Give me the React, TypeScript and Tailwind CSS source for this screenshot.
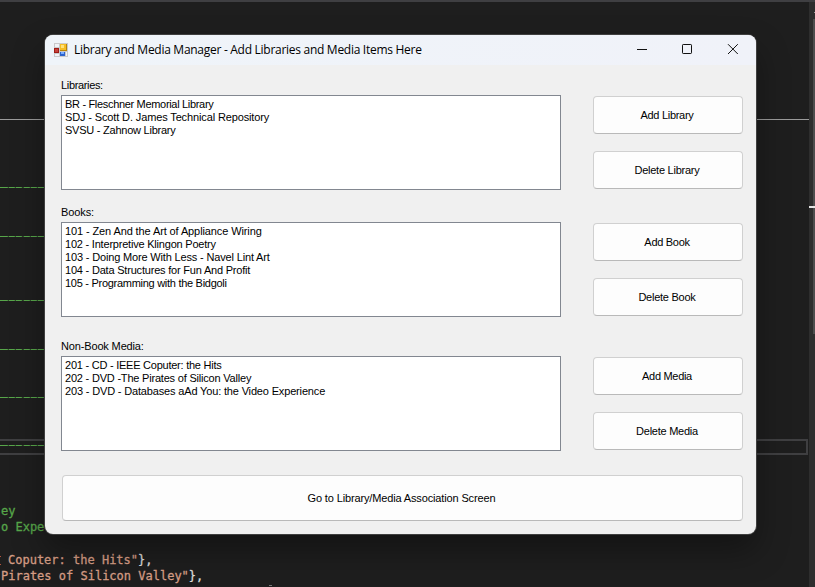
import React from 'react';

type Line = { text: string; track: string };

const libraries: Line[] = [
  { text: 'BR - Fleschner Memorial Library', track: 'tracking-[-0.32px]' },
  { text: 'SDJ - Scott D. James Technical Repository', track: 'tracking-[-0.13px]' },
  { text: 'SVSU - Zahnow Library', track: 'tracking-[-0.24px]' },
];
const books: Line[] = [
  { text: '101 - Zen And the Art of Appliance Wiring', track: 'tracking-[-0.11px]' },
  { text: '102 - Interpretive Klingon Poetry', track: 'tracking-[-0.21px]' },
  { text: '103 - Doing More With Less - Navel Lint Art', track: 'tracking-[-0.16px]' },
  { text: '104 - Data Structures for Fun And Profit', track: 'tracking-[-0.2px]' },
  { text: '105 - Programming with the Bidgoli', track: 'tracking-[-0.28px]' },
];
const media: Line[] = [
  { text: '201 - CD - IEEE Coputer: the Hits', track: 'tracking-[-0.24px]' },
  { text: '202 - DVD -The Pirates of Silicon Valley', track: 'tracking-[-0.2px]' },
  { text: '203 - DVD - Databases aAd You: the Video Experience', track: 'tracking-[-0.16px]' },
];

function Button({ label, size }: { label: string; size: string }) {
  return (
    <button
      className={`${size} flex items-center justify-center rounded-[4px] border border-[#d0d0d0] border-b-[#b9b9b9] bg-[#fdfdfd] pr-[2px] text-[11px] leading-[13px] whitespace-pre`}
    >
      {label}
    </button>
  );
}

function Section({
  label,
  labelTrack,
  lines,
  add,
  remove,
}: {
  label: string;
  labelTrack: string;
  lines: Line[];
  add: string;
  remove: string;
}) {
  return (
    <section className="flex h-[111px] gap-8">
      <div className="w-[500px]">
        <div className={`h-4 text-[11px] leading-[13px] ${labelTrack}`}>{label}</div>
        <ul className="h-[95px] border border-[#828790] bg-white pt-[2px] pl-[3px]">
          {lines.map((l) => (
            <li key={l.text} className={`h-[13px] text-[11px] leading-[13px] whitespace-pre ${l.track}`}>
              {l.text}
            </li>
          ))}
        </ul>
      </div>
      <div className="flex flex-col gap-[17px] pt-[17px]">
        <Button label={add} size="w-[150px] h-[38px] tracking-[-0.3px]" />
        <Button label={remove} size="w-[150px] h-[38px] tracking-[-0.25px]" />
      </div>
    </section>
  );
}

function Dashes({ gap }: { gap: string }) {
  return (
    <div
      className={`${gap} h-px w-[100px] shrink-0 bg-[repeating-linear-gradient(90deg,#57a64a_0px,#57a64a_6px,#2a4026_6px,#2a4026_7.2px)] bg-[position:1.8px_0]`}
    />
  );
}

function Editor() {
  return (
    <div className="flex h-full w-full flex-col border-t-2 border-[#3f3f42]">
      <div className="flex min-h-0 flex-1">
        <div className="flex w-[809px] flex-col overflow-hidden font-['DejaVu_Sans_Mono',monospace] text-[12px] leading-4 whitespace-pre [-webkit-text-stroke:0.3px_currentColor]">
          <div className="mt-[117px] h-px shrink-0 bg-[#9b9b9b]" />
          <Dashes gap="mt-[67px]" />
          <Dashes gap="mt-[48px]" />
          <Dashes gap="mt-[63px]" />
          <Dashes gap="mt-[48px]" />
          <Dashes gap="mt-[47px]" />
          <div className="mt-[41px] mr-px flex h-4 shrink-0 flex-col border-2 border-l-0 border-[#3f3f41]">
            <Dashes gap="mt-[4px]" />
          </div>
          <div className="mt-[48px] h-4 shrink-0 pl-[1px] text-[#57a64a]">ey</div>
          <div className="h-4 shrink-0 pl-[1px] text-[#57a64a]">o Experience</div>
          <div className="mt-[17px] flex h-4 shrink-0 items-center text-[#d69d85]">
            <span className="mr-[7px] h-[9px] w-px border-y border-[#b5533c]" />
            Coputer: the Hits"<span className="text-[#dcdcdc]">{'},'}</span>
          </div>
          <div className="h-4 shrink-0 pl-[1px] text-[#d69d85]">
            Pirates of Silicon Valley"<span className="text-[#dcdcdc]">{'},'}</span>
          </div>
          <div className="mt-px ml-[269px] h-px w-[3px] shrink-0 bg-[#777]" />
        </div>
        <div className="flex flex-1 flex-col items-end bg-[#2e2e2e]">
          <div className="mt-[10px] h-px w-px bg-[#999]" />
          <div className="mt-[6px] h-[187px] w-[2px] bg-[#4d4d4d]" />
          <div className="h-[2px] w-full bg-[#e4e4e4]" />
          <div className="h-[126px] w-[2px] bg-[#4d4d4d]" />
        </div>
      </div>
    </div>
  );
}

function AppIcon() {
  return (
    <svg width="14" height="14" viewBox="0 0 14 14" shapeRendering="crispEdges">
      <rect x="0" y="0" width="14" height="14" fill="#c9c9cb" />
      <rect x="1" y="1" width="4" height="3" fill="#f1f3f7" />
      <rect x="1" y="11" width="4" height="2" fill="#f1f3f7" />
      <rect x="12" y="9" width="1" height="4" fill="#f1f3f7" />
      <rect x="0" y="5" width="5" height="5" fill="#9e1c17" />
      <rect x="1" y="6" width="3" height="3" fill="#c8423a" />
      <rect x="6" y="1" width="7" height="7" fill="#b8860b" />
      <rect x="6" y="1" width="6" height="6" fill="#f5bd25" />
      <rect x="7" y="2" width="3" height="3" fill="#ffe27a" />
      <rect x="6" y="9" width="5" height="4" fill="#2c63cc" />
      <rect x="7" y="9" width="3" height="2" fill="#78adff" />
    </svg>
  );
}

export default function App() {
  return (
    <div className="relative h-[587px] w-[815px] overflow-hidden bg-[#1e1e1e]">
      <Editor />
      <div className="absolute top-[35px] left-[45px] flex h-[499px] w-[711px] flex-col overflow-hidden rounded-[8px] bg-[#f0f0f0] font-['Liberation_Sans',Arial,sans-serif] text-black shadow-[0_0_0_1px_#3f3f3f,0_16px_32px_rgba(0,0,0,0.35)]">
        <header className="flex h-[30px] shrink-0 items-center bg-[linear-gradient(90deg,#eff4f9,#f0f2f9)] pr-[11px] pl-[9px]">
          <AppIcon />
          <h1 className="ml-[6px] flex-1 font-['Open_Sans','Noto_Sans',sans-serif] text-[12px] leading-4 font-normal tracking-[-0.28px] whitespace-pre">
            Library and Media Manager - Add Libraries and Media Items Here
          </h1>
          <svg width="112" height="30" viewBox="0 0 112 30" fill="none" stroke="#111" strokeWidth="1">
            <path d="M4 14.5H14" shapeRendering="crispEdges" />
            <rect x="49.5" y="9.5" width="9" height="9" rx="0.7" />
            <path d="M95 9.2l9.8 9.8M104.8 9.2L95 19" />
          </svg>
        </header>
        <main className="flex flex-col pt-[14px] pl-4">
          <Section
            label="Libraries:"
            labelTrack="tracking-[-0.34px]"
            lines={libraries}
            add="Add Library"
            remove="Delete Library"
          />
          <div className="h-4" />
          <Section
            label="Books:"
            labelTrack="tracking-[-0.1px]"
            lines={books}
            add="Add Book"
            remove="Delete Book"
          />
          <div className="h-[23px]" />
          <Section
            label="Non-Book Media:"
            labelTrack="tracking-[-0.15px]"
            lines={media}
            add="Add Media"
            remove="Delete Media"
          />
          <div className="pt-6 pl-px">
            <Button label="Go to Library/Media Association Screen" size="w-[681px] h-[46px] tracking-[-0.14px]" />
          </div>
        </main>
      </div>
    </div>
  );
}
